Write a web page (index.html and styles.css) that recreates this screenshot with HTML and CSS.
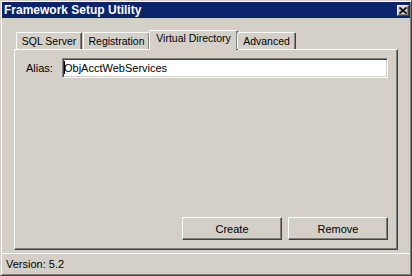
FILE: index.html
```html
<!DOCTYPE html>
<html lang="en">

<head>
    <meta charset="UTF-8">
    <meta name="viewport" content="width=device-width, initial-scale=1.0">
    <title>Framework Setup Utility</title>
    <link rel="stylesheet" href="styles.css">
</head>

<body>
    <div class="window">
        <div class="titlebar">
            <span class="title">Framework Setup Utility</span>
            <button class="close" aria-label="Close">
                <svg width="8" height="7" viewBox="0 0 8 7">
                    <path d="M0.5 0.5 L7.5 6.5 M7.5 0.5 L0.5 6.5" stroke="#000" stroke-width="1.6" fill="none" />
                </svg>
            </button>
        </div>

        <div class="content">
            <div class="tabs">
                <div class="tab tab-sql">SQL Server</div>
                <div class="tab tab-reg">Registration</div>
                <div class="tab tab-vdir selected">Virtual Directory</div>
                <div class="tab tab-adv">Advanced</div>
            </div>

            <div class="panel">
                <div class="field">
                    <label for="alias">Alias:</label>
                    <div class="textbox" id="alias"><span class="caret"></span>ObjAcctWebServices</div>
                </div>

                <div class="actions">
                    <button class="btn">Create</button>
                    <button class="btn">Remove</button>
                </div>
            </div>
        </div>

        <div class="statusbar">Version: 5.2</div>
    </div>
</body>

</html>
```

FILE: styles.css
```css
* {
    padding: 0;
    margin: 0;
    box-sizing: border-box;
}

body {
    background-color: #d4d0c8;
    font-family: "Liberation Sans", Arial, sans-serif;
    font-size: 11px;
    color: #000;
}

.window {
    width: 412px;
    height: 276px;
    display: flex;
    flex-direction: column;
    padding: 1px;
    background-color: #d4d0c8;
    border: 1px solid;
    border-color: #d4d0c8 #404040 #404040 #d4d0c8;
    box-shadow: inset 1px 1px #fff, inset -1px -1px #808080;
}

.titlebar {
    height: 16px;
    display: flex;
    align-items: center;
    justify-content: space-between;
    background-color: #0a246a;
    padding-left: 2px;
}

.title {
    color: #fff;
    font-weight: 700;
    font-size: 12px;
}

.close {
    width: 12px;
    height: 11px;
    margin-right: 1px;
    display: flex;
    align-items: center;
    justify-content: center;
    background-color: #d4d0c8;
    border: 1px solid;
    border-color: #fff #404040 #404040 #fff;
    box-shadow: inset -1px -1px #808080;
}

.close svg {
    display: block;
}

.content {
    flex: 1;
    display: flex;
    flex-direction: column;
    padding: 12px 12px 3px 12px;
}

.tabs {
    display: flex;
    align-items: flex-end;
    padding-left: 2px;
    height: 19px;
    position: relative;
    z-index: 1;
}

.tab {
    height: 17px;
    line-height: 16px;
    font-size: 10.5px;
    text-align: center;
    border-top: 1px solid #fff;
    border-left: 1px solid #fff;
    border-right: 1px solid #404040;
    border-radius: 2px 2px 0 0;
    box-shadow: inset -1px 0 #808080;
    margin-right: 1px;
    white-space: nowrap;
}

.tab-sql {
    width: 66px;
}

.tab-reg {
    width: 67px;
}

.tab-vdir {
    width: 85px;
}

.tab-adv {
    width: 59px;
}

.tab.selected {
    width: 89px;
    height: 20px;
    line-height: 14px;
    margin: 0 -1px -1px -2px;
    background-color: #d4d0c8;
}

.panel {
    flex: 1;
    display: flex;
    flex-direction: column;
    justify-content: space-between;
    border: 1px solid;
    border-color: #fff #404040 #404040 #fff;
    box-shadow: inset -1px -1px #808080;
}

.field {
    display: flex;
    align-items: center;
    padding: 8px 9px 0 11px;
}

.field label {
    width: 36px;
}

.textbox {
    flex: 1;
    height: 20px;
    line-height: 18px;
    padding-left: 1px;
    background-color: #fff;
    border: 1px solid;
    border-color: #808080 #fff #fff #808080;
    box-shadow: inset 1px 1px #404040, inset -1px -1px #d4d0c8;
    white-space: nowrap;
}

.caret {
    display: inline-block;
    width: 1px;
    height: 13px;
    margin-right: -1px;
    vertical-align: -2px;
    background-color: #000;
}

.actions {
    display: flex;
    justify-content: flex-end;
    gap: 6px;
    padding: 0 9px 9px 0;
}

.btn {
    width: 100px;
    height: 23px;
    font-family: inherit;
    font-size: 11px;
    color: #000;
    background-color: #d4d0c8;
    border: 1px solid;
    border-color: #fff #404040 #404040 #fff;
    box-shadow: inset -1px -1px #808080;
}

.statusbar {
    height: 21px;
    line-height: 20px;
    padding-left: 4px;
    border-top: 1px solid #fff;
}
```
